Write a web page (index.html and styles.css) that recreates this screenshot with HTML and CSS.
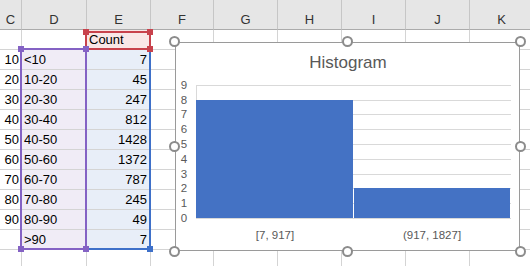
FILE: index.html
```html
<!DOCTYPE html>
<html lang="en">
<head>
    <meta charset="UTF-8">
    <title>Histogram</title>
    <link rel="stylesheet" href="styles.css">
</head>
<body>
    <div class="sheet">
        <!-- Spaltenköpfe -->
        <div class="row head">
            <div>C</div><div>D</div><div>E</div><div>F</div><div>G</div><div>H</div><div>I</div><div>J</div><div>K</div>
        </div>
        <div class="row">
            <div></div><div></div><div class="pc">Count</div><div></div><div></div><div></div><div></div><div></div><div></div>
        </div>
        <div class="row">
            <div class="num">10</div><div class="pd">&lt;10</div><div class="pe val">7</div><div></div><div></div><div></div><div></div><div></div><div></div>
        </div>
        <div class="row">
            <div class="num">20</div><div class="pd">10-20</div><div class="pe val">45</div><div></div><div></div><div></div><div></div><div></div><div></div>
        </div>
        <div class="row">
            <div class="num">30</div><div class="pd">20-30</div><div class="pe val">247</div><div></div><div></div><div></div><div></div><div></div><div></div>
        </div>
        <div class="row">
            <div class="num">40</div><div class="pd">30-40</div><div class="pe val">812</div><div></div><div></div><div></div><div></div><div></div><div></div>
        </div>
        <div class="row">
            <div class="num">50</div><div class="pd">40-50</div><div class="pe val">1428</div><div></div><div></div><div></div><div></div><div></div><div></div>
        </div>
        <div class="row">
            <div class="num">60</div><div class="pd">50-60</div><div class="pe val">1372</div><div></div><div></div><div></div><div></div><div></div><div></div>
        </div>
        <div class="row">
            <div class="num">70</div><div class="pd">60-70</div><div class="pe val">787</div><div></div><div></div><div></div><div></div><div></div><div></div>
        </div>
        <div class="row">
            <div class="num">80</div><div class="pd">70-80</div><div class="pe val">245</div><div></div><div></div><div></div><div></div><div></div><div></div>
        </div>
        <div class="row">
            <div class="num">90</div><div class="pd">80-90</div><div class="pe val">49</div><div></div><div></div><div></div><div></div><div></div><div></div>
        </div>
        <div class="row">
            <div class="num"></div><div class="pd">&gt;90</div><div class="pe val">7</div><div></div><div></div><div></div><div></div><div></div><div></div>
        </div>
        <div class="row">
            <div></div><div></div><div></div><div></div><div></div><div></div><div></div><div></div><div></div>
        </div>

        <!-- Markierte Bereiche -->
        <div class="sel sel-e"></div>
        <div class="sel sel-c"></div>
        <div class="sel sel-d"></div>
        <div class="sq purple" style="left: 18px; top: 46px;"></div>
        <div class="sq red" style="left: 83px; top: 29px;"></div>
        <div class="sq red" style="left: 147px; top: 29px;"></div>
        <div class="sq red" style="left: 147px; top: 46px;"></div>
        <div class="sq purple" style="left: 83px; top: 46px;"></div>
        <div class="sq purple" style="left: 18px; top: 246px;"></div>
        <div class="sq blue" style="left: 147px; top: 246px;"></div>
        <div class="sq purple" style="left: 83px; top: 246px;"></div>

        <!-- Diagramm -->
        <div class="chart">
            <svg width="343" height="207" viewBox="0 0 343 207">
                <text class="title" x="172" y="25" text-anchor="middle">Histogram</text>
                <g stroke="#d9d9d9" stroke-width="1">
                    <line x1="20" x2="335" y1="42.5" y2="42.5"/>
                    <line x1="20" x2="335" y1="57.5" y2="57.5"/>
                    <line x1="20" x2="335" y1="71.5" y2="71.5"/>
                    <line x1="20" x2="335" y1="86.5" y2="86.5"/>
                    <line x1="20" x2="335" y1="101.5" y2="101.5"/>
                    <line x1="20" x2="335" y1="116.5" y2="116.5"/>
                    <line x1="20" x2="335" y1="131.5" y2="131.5"/>
                    <line x1="20" x2="335" y1="145.5" y2="145.5"/>
                    <line x1="20" x2="335" y1="160.5" y2="160.5"/>
                    <line x1="20" x2="335" y1="175.5" y2="175.5"/>
                    <line x1="20.5" x2="20.5" y1="42" y2="57"/>
                </g>
                <rect x="20" y="57" width="157" height="118" fill="#4472c4"/>
                <rect x="178" y="145" width="156" height="30" fill="#4472c4"/>
                <g class="axis" text-anchor="middle">
                    <text x="8" y="46">9</text>
                    <text x="8" y="61">8</text>
                    <text x="8" y="75">7</text>
                    <text x="8" y="90">6</text>
                    <text x="8" y="105">5</text>
                    <text x="8" y="120">4</text>
                    <text x="8" y="135">3</text>
                    <text x="8" y="149">2</text>
                    <text x="8" y="164">1</text>
                    <text x="8" y="179">0</text>
                    <text x="99" y="196">[7, 917]</text>
                    <text x="256" y="196">(917, 1827]</text>
                </g>
            </svg>
            <div class="h tl"></div>
            <div class="h tc"></div>
            <div class="h tr"></div>
            <div class="h ml"></div>
            <div class="h mr"></div>
            <div class="h bl"></div>
            <div class="h bc"></div>
            <div class="h br"></div>
        </div>
    </div>
</body>
</html>
```

FILE: styles.css
```css
body {
    margin: 0;
    background-color: #fff;
    font-family: "Liberation Sans", Arial, sans-serif;
    font-size: 13px;
    color: #000;
    overflow: hidden;
}
.sheet {
    position: relative;
    width: 530px;
    height: 266px;
    overflow: hidden;
}
.row {
    display: grid;
    grid-template-columns: 22px 65px 64px 63px 64px 64px 64px 64px 64px;
    height: 20px;
}
.row > div {
    box-sizing: border-box;
    border-right: 1px solid #d4d4d4;
    border-bottom: 1px solid #d4d4d4;
    line-height: 19px;
    padding: 0 2px;
    white-space: nowrap;
}
.head {
    height: 30px;
    background-color: #e6e6e6;
}
.head > div {
    border-right: 1px solid #c6c6c6;
    border-bottom: 1px solid #ababab;
    text-align: center;
    padding-top: 10px;
    color: #333;
}
.num {
    text-align: right;
    padding-right: 2px;
}
.val {
    text-align: right;
}
.row > .val {
    padding-right: 3px;
}
.pd {
    background-color: #f0ecf6;
}
.pe {
    background-color: #e8eef8;
}
.pc {
    background-color: #f9e7e7;
}
.sel {
    position: absolute;
    box-sizing: border-box;
    border: 2px solid;
}
.sel-d {
    left: 20px;
    top: 48px;
    width: 67px;
    height: 202px;
    border-color: #8462c4;
}
.sel-e {
    left: 85px;
    top: 48px;
    width: 66px;
    height: 202px;
    border-color: #3e70c9;
}
.sel-c {
    left: 85px;
    top: 31px;
    width: 66px;
    height: 19px;
    border-color: #c8424c;
}
.sq {
    position: absolute;
    width: 6px;
    height: 6px;
}
.purple {
    background-color: #8462c4;
}
.red {
    background-color: #c8424c;
}
.blue {
    background-color: #3e70c9;
}
.chart {
    position: absolute;
    left: 175px;
    top: 42px;
    width: 345px;
    height: 209px;
    box-sizing: border-box;
    border: 1px solid #9a9a9a;
    background-color: #fff;
}
.chart svg {
    display: block;
}
.title {
    font-family: "Liberation Sans", Arial, sans-serif;
    font-size: 17px;
    fill: #595959;
}
.axis {
    font-family: "Liberation Sans", Arial, sans-serif;
    font-size: 11.5px;
    fill: #595959;
}
.h {
    position: absolute;
    width: 11px;
    height: 11px;
    box-sizing: border-box;
    border: 2px solid #8c8c8c;
    border-radius: 50%;
    background-color: #fff;
}
.tl { left: -7px; top: -7px; }
.tc { left: calc(50% - 6px); top: -7px; }
.tr { right: -7px; top: -7px; }
.ml { left: -7px; top: calc(50% - 6px); }
.mr { right: -7px; top: calc(50% - 6px); }
.bl { left: -7px; bottom: -7px; }
.bc { left: calc(50% - 6px); bottom: -7px; }
.br { right: -7px; bottom: -7px; }
```
